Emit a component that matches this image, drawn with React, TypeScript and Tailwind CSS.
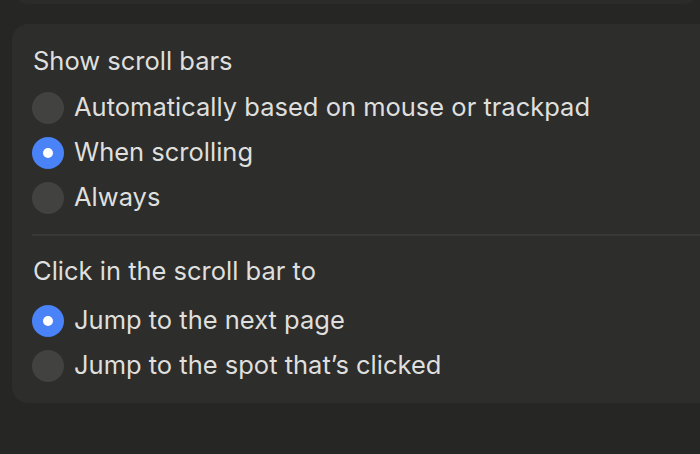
function Radio({ checked }: { checked?: boolean }) {
  return (
    <span
      className={
        checked
          ? "flex h-8 w-8 shrink-0 items-center justify-center rounded-full bg-[#4a82f7]"
          : "flex h-8 w-8 shrink-0 items-center justify-center rounded-full bg-[#424240]"
      }
    >
      {checked && <span className="h-2.5 w-2.5 rounded-full bg-white" />}
    </span>
  )
}

function Option({ label, checked }: { label: string; checked?: boolean }) {
  return (
    <div className="flex h-[45px] items-center gap-[10px]">
      <Radio checked={checked} />
      <span>{label}</span>
    </div>
  )
}

export default function App() {
  return (
    <div
      className="flex h-[454px] w-[700px] flex-col overflow-hidden bg-[#262624] text-[25.5px] text-[#dfdfdd]"
      style={{ fontFamily: "Inter, 'Liberation Sans', sans-serif" }}
    >
      <div className="-mt-10 ml-3 h-[44px] shrink-0 rounded-2xl bg-[#2b2b29]" />
      <div className="mt-5 ml-3 w-[720px] rounded-2xl bg-[#2d2d2b] pb-[15px] pl-5 pt-[19px]">
        <div className="pl-px leading-[36px]">Show scroll bars</div>
        <div className="mt-[6px]">
          <Option label="Automatically based on mouse or trackpad" />
          <Option label="When scrolling" checked />
          <Option label="Always" />
        </div>
        <div className="mt-[14px] h-[2px] bg-[#383836]" />
        <div className="mt-[17px] pl-px leading-[36px]">Click in the scroll bar to</div>
        <div className="mt-[9px]">
          <Option label="Jump to the next page" checked />
          <Option label="Jump to the spot that’s clicked" />
        </div>
      </div>
    </div>
  )
}
